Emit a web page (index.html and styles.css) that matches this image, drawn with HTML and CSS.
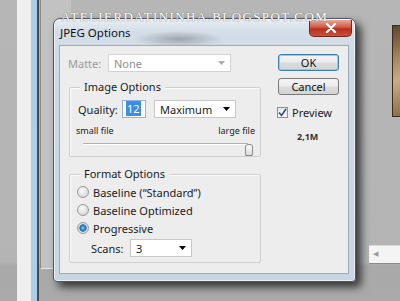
FILE: index.html
```html
<!DOCTYPE html>
<html lang="en">
<head>
    <meta charset="UTF-8">
    <title>JPEG Options</title>
    <link rel="stylesheet" href="styles.css">
</head>
<body>
    <div class="strip-light"></div>
    <div class="strip-blue"></div>
    <div class="back-panel"></div>
    <div class="thumb"></div>
    <div class="hscroll"><span class="hscroll-arrow">&#9664;</span></div>
    <div class="watermark">ATELIERDATININHA.BLOGSPOT.COM</div>

    <div class="dialog">
        <div class="titlebar">
            <span class="title">JPEG Options</span>
            <button class="close">
                <svg width="12" height="10" viewBox="0 0 12 10"><path d="M2 1 L10 9 M10 1 L2 9" stroke="#fff" stroke-width="2.4" stroke-linecap="round"/></svg>
            </button>
        </div>
        <div class="client">
            <div class="main-col">
                <div class="matte-row">
                    <span class="matte-label">Matte:</span>
                    <div class="select select-disabled">
                        <span>None</span>
                        <svg class="arrow" width="7" height="4" viewBox="0 0 7 4"><path d="M0 0 H7 L3.5 4 Z" fill="#aaa"/></svg>
                    </div>
                </div>

                <div class="group group-image">
                    <span class="legend">Image Options</span>
                    <div class="quality-row">
                        <span class="q-label">Quality:</span>
                        <div class="q-input"><span class="sel">12</span></div>
                        <div class="select q-select">
                            <span>Maximum</span>
                            <svg class="arrow" width="7" height="4" viewBox="0 0 7 4"><path d="M0 0 H7 L3.5 4 Z" fill="#000"/></svg>
                        </div>
                    </div>
                    <div class="size-row">
                        <span>small file</span>
                        <span>large file</span>
                    </div>
                    <div class="slider">
                        <div class="track"></div>
                        <div class="knob"></div>
                    </div>
                </div>

                <div class="group group-format">
                    <span class="legend">Format Options</span>
                    <div class="radio-row first"><span class="radio"></span>Baseline (&ldquo;Standard&rdquo;)</div>
                    <div class="radio-row"><span class="radio"></span>Baseline Optimized</div>
                    <div class="radio-row"><span class="radio radio-on"></span>Progressive</div>
                    <div class="scans-row">
                        <span class="scans-label">Scans:</span>
                        <div class="select scans-select">
                            <span>3</span>
                            <svg class="arrow" width="7" height="4" viewBox="0 0 7 4"><path d="M0 0 H7 L3.5 4 Z" fill="#000"/></svg>
                        </div>
                    </div>
                </div>
            </div>

            <div class="side-col">
                <button class="btn btn-default">OK</button>
                <button class="btn">Cancel</button>
                <div class="preview-row">
                    <span class="check">
                        <svg width="9" height="9" viewBox="0 0 9 9"><path d="M1 4.5 L3.5 7.5 L8 1" stroke="#2b4a9c" stroke-width="1.6" fill="none"/></svg>
                    </span>
                    <span>Preview</span>
                </div>
                <div class="filesize">2,1M</div>
            </div>
        </div>
    </div>
</body>
</html>
```

FILE: styles.css
```css
body {
    margin: 0;
    width: 400px;
    height: 301px;
    overflow: hidden;
    position: relative;
    background: linear-gradient(#b6b6b6 0, #b4b4b4 262px, #a9a9a9 266px, #aaaaaa 100%);
    font-family: "Noto Sans", "Liberation Sans", sans-serif;
    font-size: 11px;
    color: #1b1b1b;
}

/* desktop behind the dialog */
.strip-light {
    position: absolute;
    left: 17px;
    top: 0;
    width: 14px;
    height: 301px;
    background: #efefef;
}
.strip-blue {
    position: absolute;
    left: 31px;
    top: 0;
    width: 6px;
    height: 301px;
    background: #a9cfec;
    border-right: 2px solid #4a4a4a;
}
.back-panel {
    position: absolute;
    left: 40px;
    top: 0;
    width: 30px;
    height: 268px;
    background: #c2c2c2;
    border-left: 1px solid #8a8a8a;
    border-bottom: 1px solid #e8e8e8;
}
.thumb {
    position: absolute;
    left: 392px;
    top: 25px;
    width: 10px;
    height: 90px;
    border: 1px solid #3a2a18;
    background: linear-gradient(160deg, #5a4630 0, #a4855c 35%, #c7ad86 60%, #8b6c46 100%);
}
.hscroll {
    position: absolute;
    left: 369px;
    top: 245px;
    width: 40px;
    height: 17px;
    background: #f4f4f4;
    border-top: 1px solid #d8d8d8;
    border-bottom: 1px solid #8c8c8c;
}
.hscroll-arrow {
    display: block;
    margin: 3px 0 0 4px;
    font-size: 7px;
    color: #9a9a9a;
}
.watermark {
    position: absolute;
    left: 61px;
    top: 9px;
    font-family: "Liberation Serif", serif;
    font-size: 13px;
    letter-spacing: 1.4px;
    color: #fff;
    text-shadow: 0 0 1px #777, 0 0 1px #777;
    z-index: 5;
}

/* the dialog window */
.dialog {
    position: absolute;
    left: 53px;
    top: 18px;
    width: 301px;
    height: 262px;
    border: 1px solid #4d5966;
    border-radius: 7px 7px 4px 4px;
    background:
        radial-gradient(ellipse 45px 8px at 125px 20px, rgba(60, 60, 60, 0.35), rgba(60, 60, 60, 0)),
        linear-gradient(#e9eef3 0, #d4dee8 12px, #cdd9e5 40px, #c8d6e4 100%);
    box-shadow: 5px 5px 8px rgba(0, 0, 0, 0.7), inset 0 0 0 1px rgba(255, 255, 255, 0.6);
    display: flex;
    flex-direction: column;
}
.titlebar {
    height: 26px;
    display: flex;
    align-items: center;
    justify-content: space-between;
    padding-left: 6px;
}
.title {
    font-size: 11.5px;
    color: #111;
    margin-top: 1px;
}
.close {
    align-self: flex-start;
    width: 43px;
    height: 17px;
    margin-top: 1px;
    margin-right: 3px;
    padding: 0;
    border: 1px solid #6e2a22;
    border-top: none;
    border-radius: 0 0 5px 5px;
    background: linear-gradient(#e8a89a 0, #d25a45 45%, #b8301f 55%, #c9503a 100%);
    display: flex;
    align-items: center;
    justify-content: center;
}

.client {
    flex: 1;
    margin: 0 6px 7px 5px;
    background: #ededed;
    border: 1px solid #9aaabb;
    display: flex;
    padding: 8px 0 0 8px;
}
.main-col {
    width: 192px;
    display: flex;
    flex-direction: column;
}
.matte-row {
    display: flex;
    align-items: center;
    height: 18px;
}
.matte-label {
    width: 40px;
    color: #9a9a9a;
}
.select {
    box-sizing: border-box;
    height: 18px;
    background: #fff;
    border: 1px solid #c8c8c8;
    display: flex;
    align-items: center;
    justify-content: space-between;
    padding: 0 5px 0 5px;
}
.select-disabled {
    width: 123px;
    color: #8e8e8e;
    border-color: #d2d2d2;
}
.arrow {
    flex: none;
}

.group {
    position: relative;
    box-sizing: border-box;
    margin-left: 1px;
    width: 192px;
    border: 1px solid #cfcfcf;
    box-shadow: inset 1px 1px 0 #fafafa;
    border-radius: 2px;
}
.legend {
    position: absolute;
    left: 10px;
    top: -8px;
    padding: 0 4px;
    background: #ededed;
    line-height: 14px;
}
.group-image {
    margin-top: 15px;
    height: 70px;
}
.quality-row {
    display: flex;
    align-items: center;
    height: 18px;
    margin-top: 12px;
    padding-left: 8px;
}
.q-label {
    width: 44px;
}
.q-input {
    box-sizing: border-box;
    width: 24px;
    height: 18px;
    background: #fff;
    border: 1px solid #8db2e3;
    padding: 1px 0 0 3px;
    line-height: 14px;
}
.q-input .sel {
    background: #3b8ee6;
    color: #fff;
    padding: 0 1px;
}
.q-select {
    width: 82px;
    margin-left: 8px;
}
.size-row {
    display: flex;
    justify-content: space-between;
    padding: 0 5px 0 6px;
    margin-top: 7px;
    font-size: 9px;
    line-height: 12px;
}
.slider {
    position: relative;
    height: 12px;
    margin-top: 1px;
}
.track {
    margin: 6px 12px 0 13px;
    height: 1px;
    background: #b0b0b0;
    border-bottom: 1px solid #fff;
}
.knob {
    position: absolute;
    left: 175px;
    top: 1px;
    width: 6px;
    height: 10px;
    background: linear-gradient(#fdfdfd, #dcdcdc);
    border: 1px solid #8a8a8a;
    border-radius: 3px 3px 1px 1px;
}

.group-format {
    margin-top: 17px;
    height: 89px;
}
.radio-row {
    display: flex;
    align-items: center;
    height: 18px;
    padding-left: 7px;
}
.radio-row.first {
    margin-top: 8px;
}
.radio {
    box-sizing: border-box;
    width: 12px;
    height: 12px;
    border-radius: 50%;
    border: 1px solid #9a9a9a;
    background: radial-gradient(circle at 40% 35%, #fdfdfd 0, #dedede 60%, #c9c9c9 100%);
    margin-right: 4px;
}
.radio-on {
    background: radial-gradient(circle at 50% 50%, #9fd3f4 0, #1d79c0 2.5px, #3a86c4 3.5px, #e4e4e4 4px, #d0d0d0 100%);
}
.scans-row {
    display: flex;
    align-items: center;
    height: 18px;
    margin-top: 2px;
    padding-left: 21px;
}
.scans-label {
    width: 39px;
}
.scans-select {
    width: 62px;
}

.side-col {
    margin-left: 18px;
    width: 62px;
    display: flex;
    flex-direction: column;
}
.btn {
    box-sizing: border-box;
    width: 61px;
    height: 17px;
    padding: 0;
    font-family: "Noto Sans", sans-serif;
    font-size: 11px;
    line-height: 14px;
    color: #111;
    border: 1px solid #7a7a7a;
    border-radius: 3px;
    background: linear-gradient(#f4f4f4 0, #ececec 48%, #dcdcdc 52%, #d4d4d4 100%);
    margin-bottom: 7px;
}
.btn-default {
    border-color: #3c7fb1;
    box-shadow: inset 0 0 0 1px #7ed3f7;
}
.preview-row {
    display: flex;
    align-items: center;
    height: 12px;
    margin-top: 4px;
    margin-left: -1px;
}
.check {
    box-sizing: border-box;
    width: 11px;
    height: 11px;
    border: 1px solid #8f8f8f;
    background: linear-gradient(#e6e6e6, #fafafa);
    display: flex;
    align-items: center;
    justify-content: center;
    margin-right: 4px;
}
.filesize {
    margin: 12px 0 0 19px;
    font-size: 9px;
    font-weight: bold;
    color: #333;
}
```
